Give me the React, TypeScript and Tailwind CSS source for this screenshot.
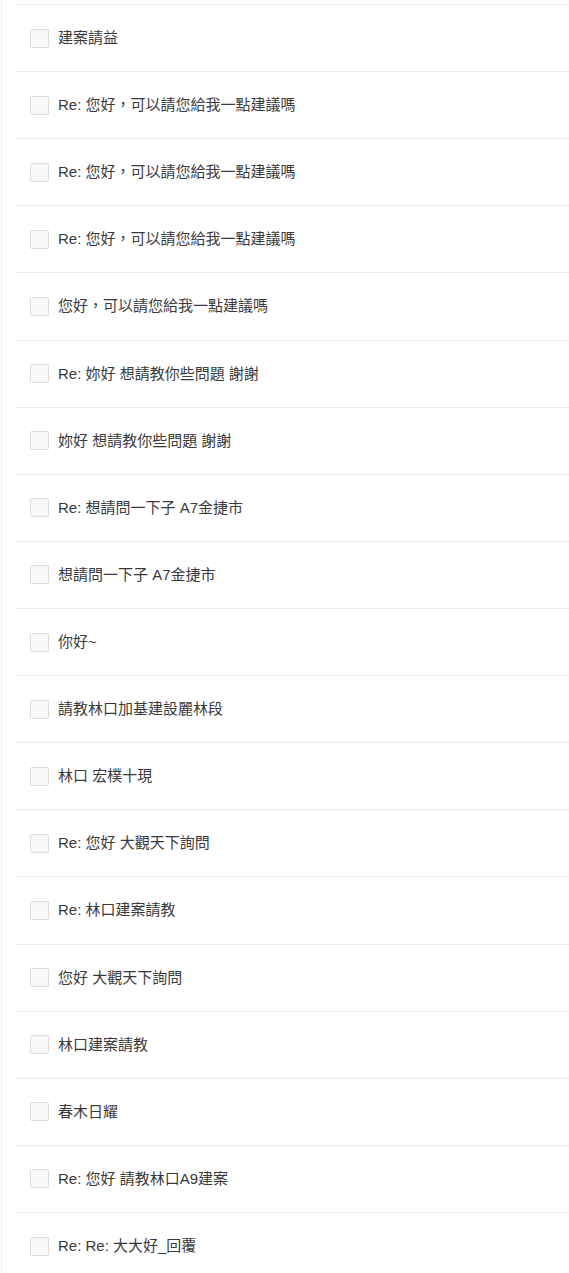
import React from "react";

const items = [
  "建案請益",
  "Re: 您好，可以請您給我一點建議嗎",
  "Re: 您好，可以請您給我一點建議嗎",
  "Re: 您好，可以請您給我一點建議嗎",
  "您好，可以請您給我一點建議嗎",
  "Re: 妳好 想請教你些問題 謝謝",
  "妳好 想請教你些問題 謝謝",
  "Re: 想請問一下子 A7金捷市",
  "想請問一下子 A7金捷市",
  "你好~",
  "請教林口加基建設麗林段",
  "林口 宏樸十現",
  "Re: 您好 大觀天下詢問",
  "Re: 林口建案請教",
  "您好 大觀天下詢問",
  "林口建案請教",
  "春木日耀",
  "Re: 您好 請教林口A9建案",
  "Re: Re: 大大好_回覆",
];

export default function App() {
  return (
    <div
      className="min-h-[1273px] bg-white ml-[1px] border-l border-[#f0f0f0] pl-[13px] overflow-hidden"
      style={{ fontFamily: '"Liberation Sans", Arial, "Noto Sans CJK TC", sans-serif' }}
    >
      <div className="h-[4px]" />
      {items.map((t, i) => (
        <div
          key={i}
          className="h-[67.11px] border-t border-[#ebebeb] flex items-center pl-[15px]"
        >
          <div className="w-[19px] h-[19px] rounded-[2px] border border-[#dcdcdc] bg-[#f8f8f8] shrink-0" />
          <span className="ml-[9px] text-[15px] text-[#3a3a3a] whitespace-nowrap leading-none -mt-[1px]">
            {t}
          </span>
        </div>
      ))}
    </div>
  );
}
